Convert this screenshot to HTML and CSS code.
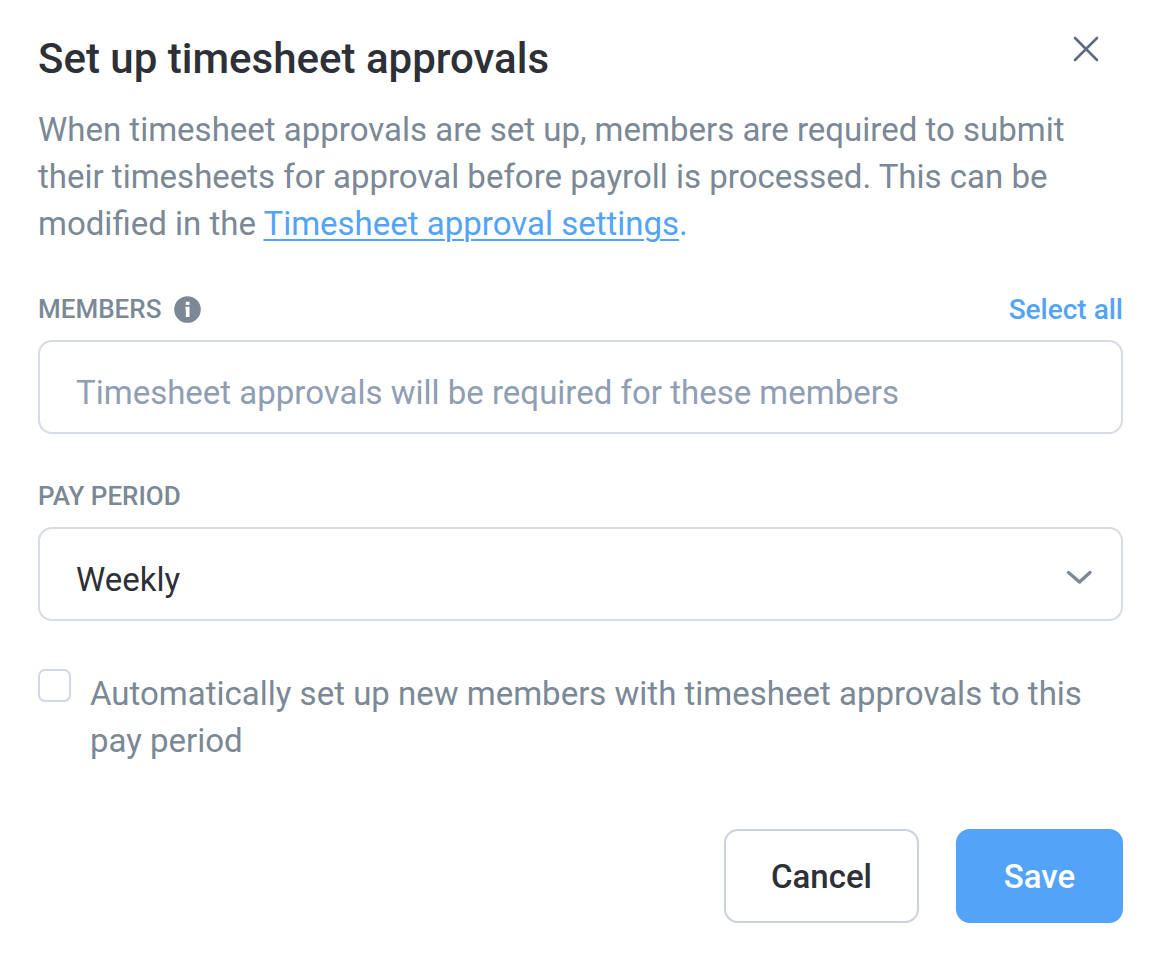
FILE: index.html
```html
<!DOCTYPE html>
<html lang="en">
<head>
<meta charset="utf-8">
<meta name="viewport" content="width=device-width, initial-scale=1">
<title>Set up timesheet approvals</title>
<link rel="stylesheet" href="styles.css">
</head>
<body>
<main class="dialog" role="dialog" aria-labelledby="dialog-title">
  <header class="dialog-header">
    <h1 class="dialog-title" id="dialog-title">Set up timesheet approvals</h1>
    <button class="close" type="button" aria-label="Close">
      <svg width="26" height="26" viewBox="0 0 26 26" fill="none" stroke="currentColor" stroke-width="2.6" stroke-linecap="round"><path d="M2 2L24 24M24 2L2 24"/></svg>
    </button>
  </header>
  <p class="intro">When timesheet approvals are set up, members are required to submit their timesheets for approval before payroll is processed. This can be modified in the <a class="link" href="#">Timesheet approval settings</a><span class="link-end">.</span></p>
  <form class="form">
    <div class="field">
      <div class="field-head">
        <label class="label" for="members">MEMBERS</label>
        <svg class="info" width="27" height="27" viewBox="0 0 27 27"><circle cx="13.500" cy="13.500" r="13.300" fill="currentColor"/><path fill="#fff" d="M11.800 5.700h3.700v3.300h-3.700zM11.300 10.800h4.200v10.200h-3.700v-8.400h-.5z"/></svg>
        <button class="select-all" type="button">Select all</button>
      </div>
      <input class="control" id="members" type="text" placeholder="Timesheet approvals will be required for these members">
    </div>
    <div class="field">
      <div class="field-head">
        <label class="label" for="period">PAY PERIOD</label>
      </div>
      <div class="select-wrap">
        <select class="control select" id="period"><option>Weekly</option><option>Monthly</option></select>
        <svg class="chevron" width="28" height="18" viewBox="0 0 28 18" fill="none" stroke="currentColor" stroke-width="3.400" stroke-linecap="round" stroke-linejoin="round"><path d="M3.500 4.500L14.500 14L25 4.500"/></svg>
      </div>
    </div>
    <div class="auto">
      <input class="checkbox" type="checkbox" id="auto">
      <label class="auto-label" for="auto">Automatically set up new members with timesheet approvals to this pay period</label>
    </div>
    <footer class="actions">
      <button class="button" type="button">Cancel</button>
      <button class="button primary" type="submit">Save</button>
    </footer>
  </form>
</main>
</body>
</html>
```
FILE: styles.css
```css
* {
  box-sizing: border-box;
}

body {
  margin: 0;
  background: #fff;
  color: #2d3036;
  font-family: Roboto, "Liberation Sans", sans-serif;
  font-size: 33px;
}

button,
input,
select {
  font: inherit;
}

.dialog {
  padding: 33px 33px 37px 38px;
}

.dialog-header {
  display: flex;
  align-items: flex-start;
  justify-content: space-between;
}

.dialog-title {
  margin: 0;
  font-size: 42px;
  font-weight: 500;
  line-height: 52px;
}

.close {
  display: flex;
  margin: 3px 24px 0 0;
  padding: 0;
  border: 0;
  background: none;
  color: #5f6b80;
}

.intro {
  margin: 21px 0 0;
  color: #7b8896;
  line-height: 47px;
}

.link {
  color: #53a3f8;
  text-decoration-thickness: 2px;
  text-underline-offset: 4px;
}

.link-end {
  color: #53a3f8;
}

.form {
  display: flex;
  flex-direction: column;
  gap: 45px;
  margin-top: 45px;
}

.field-head {
  display: flex;
  align-items: center;
  height: 34px;
  margin-bottom: 14px;
}

.label {
  color: #7b8896;
  font-size: 26px;
  font-weight: 500;
}

.info {
  margin-left: 13px;
  color: #7b8896;
}

.select-all {
  margin-left: auto;
  padding: 0;
  border: 0;
  background: none;
  color: #53a3f8;
  font-size: 28px;
  font-weight: 500;
}

.control {
  display: block;
  width: 100%;
  height: 94px;
  padding: 10px 36px 0;
  border: 2px solid #d7dbe6;
  border-radius: 14px;
  background: #fff;
  color: #2d3036;
}

.control::placeholder {
  color: #909eb4;
  opacity: 1;
}

.select-wrap {
  position: relative;
}

.select {
  appearance: none;
}

.chevron {
  position: absolute;
  top: 41px;
  right: 30px;
  color: #7b8896;
  pointer-events: none;
}

.auto {
  display: flex;
  align-items: flex-start;
  gap: 19px;
}

.checkbox {
  flex: none;
  appearance: none;
  width: 33px;
  height: 33px;
  margin: 3px 0 0;
  border: 2px solid #d0d8e6;
  border-radius: 7px;
  background: #fff;
}

.checkbox:checked {
  background: #53a3f8;
}

.auto-label {
  padding-top: 4px;
  color: #7b8896;
  line-height: 47px;
}

.actions {
  display: flex;
  justify-content: flex-end;
  gap: 37px;
  margin-top: 20px;
}

.button {
  min-width: 167px;
  height: 94px;
  padding: 0 45px;
  border: 2px solid #cbd1dd;
  border-radius: 14px;
  background: #fff;
  color: #2d3036;
  font-weight: 500;
}

.primary {
  border-color: #53a3f8;
  background: #53a3f8;
  color: #fff;
}
```
